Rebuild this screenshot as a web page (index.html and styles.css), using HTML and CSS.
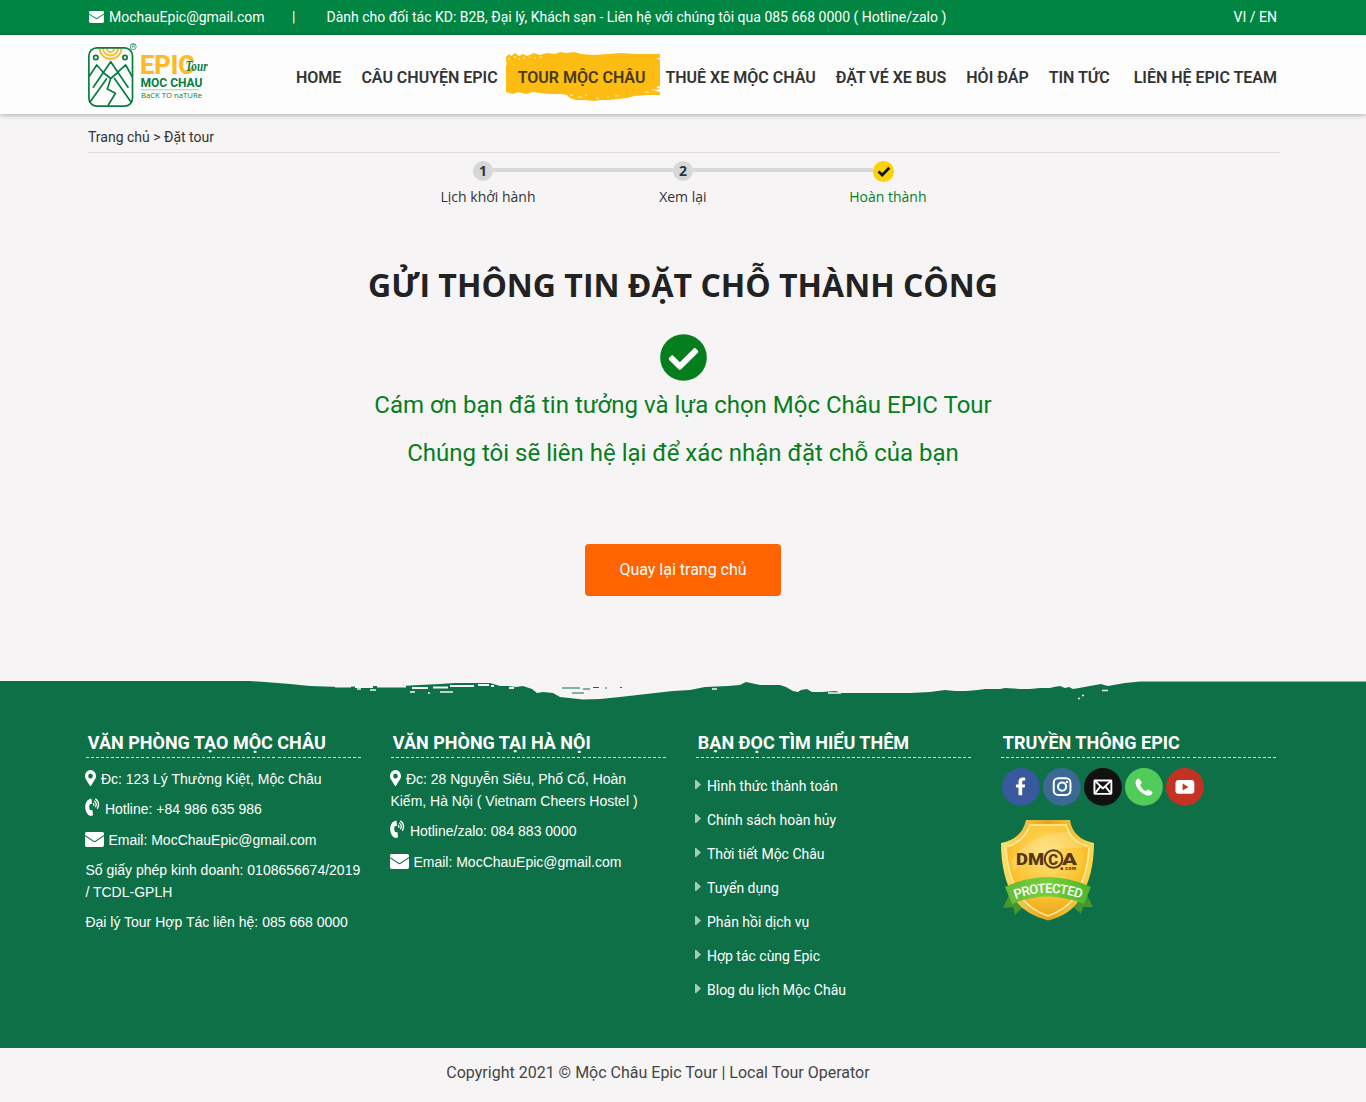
FILE: index.html
```html
<!DOCTYPE html>
<html lang="vi">
<head>
<meta charset="utf-8">
<title>Mộc Châu Epic Tour</title>
<link rel="stylesheet" href="styles.css">
</head>
<body>
<svg class="defs" width="0" height="0">
  <symbol id="mail" viewBox="0 0 19 15"><path d="M1.500 0h16Q19 0 19 1.500V3L9.500 9.200 0 3V1.500Q0 0 1.500 0z"/><path d="M0 4.300 8.300 9.800Q9.500 10.600 10.700 9.800L19 4.300V13.300Q19 15 17.300 15H1.700Q0 15 0 13.300z"/></symbol>
  <symbol id="pin" viewBox="0 0 384 512" preserveAspectRatio="none"><path d="M172 502C27 291 0 270 0 192a192 192 0 1 1 384 0c0 78-27 99-172 310-10 13-30 13-40 0zM192 272a80 80 0 1 0 0-160 80 80 0 0 0 0 160z"/></symbol>
  <symbol id="ring" viewBox="0 0 15 18"><path d="M4.300 1.200 6.400.6 7 5.500 4.600 6.400Q3.700 9.300 5 12L7.500 12.300 8 17.200 5.800 17.900Q3.200 18 1.600 14.800-.8 9.700.9 4.900 2 2.100 4.300 1.200z"/><path d="M8 5Q9.400 6 8.500 7.900M9.200 2.800Q12.500 5.200 10.500 9.200M10.300.7Q15.500 4.600 12.300 10.800" fill="none" stroke="#fff" stroke-width="1.300"/></symbol>
</svg>
<div class="topbar">
  <div class="topbar-in">
    <svg class="top-mail"><use href="#mail"/></svg>
    <span class="t-mail">MochauEpic@gmail.com</span>
    <span class="t-sep">|</span>
    <span class="t-msg">Dành cho đối tác KD: B2B, Đại lý, Khách sạn - Liên hệ với chúng tôi qua 085 668 0000 ( Hotline/zalo )</span>
    <span class="t-lang">VI / EN</span>
  </div>
</div>
<header class="header">
  <div class="header-in">
    <svg class="logo" viewBox="0 0 124 68" width="124" height="68">
      <g fill="none" stroke="#fdb92a" stroke-width="1.800"><path d="M11.500 5a11 11 0 0 0 22 0M15 5a7.500 7.500 0 0 0 15 0M18.500 5a4 4 0 0 0 8 0"/></g>
      <g fill="none" stroke="#087d42" stroke-width="1.700" stroke-linejoin="round" stroke-linecap="round">
        <rect x=".9" y="4.800" width="43.600" height="58.400" rx="8"/>
        <circle cx="7.800" cy="14.500" r="2.200"/><circle cx="37" cy="14.500" r="2.200"/>
        <path d="M1.500 33 8.700 22 14.700 28.700M43.800 33 37.700 22 30.300 28.700M5.300 44.300 22.700 18.700 40 44.300M2 59 18.500 36M14.500 29 22.700 35.500 30.500 29M26.500 35.500 43 59M22.700 35.500 19.300 46 27.500 50.300 20.300 62"/>
      </g>
      <circle cx="45.200" cy="3.600" r="3" fill="none" stroke="#087d42" stroke-width=".7"/>
      <text x="43.500" y="5.400" class="lg-r">R</text>
      <text x="52" y="31" class="lg-epic" textLength="55" lengthAdjust="spacingAndGlyphs">EPIC</text>
      <text x="97.500" y="27.500" class="lg-tour" textLength="22" lengthAdjust="spacingAndGlyphs">Tour</text>
      <text x="52.500" y="44.300" class="lg-moc" textLength="62" lengthAdjust="spacingAndGlyphs">MOC CHAU</text>
      <path d="M53 46.800H111" stroke="#8fc0a5" stroke-width=".8"/>
      <text x="53" y="55.200" class="lg-back" textLength="61" lengthAdjust="spacingAndGlyphs">BaCK TO naTURe</text>
    </svg>
    <nav class="nav">
      <a class="n1">HOME</a>
      <a class="n2">CÂU CHUYỆN EPIC</a>
      <a class="n3 active"><svg class="brush" viewBox="0 0 154 50" width="154" height="50"><path fill="#fdbc11" d="M0 5 3 2 5 4 9 1 13 4 17 2 21 4 28 1 34 3 41 1 49 2 54 0 60 1 68 0 75 2 88 3 102 2 115 1 130 2 154 2V6H150L154 8V34L150 35 154 37 148 39 154 40V43L142 43 128 44 121 46 112 47 103 48 94 48 88 49 78 48 70 48 64 46 61 43 55 42 43 42 34 41 27 40 20 42 12 40 7 42 0 40V14L1 12 0 9z"/><path d="M2 7h2M5 10h1M8 5h2M12 7h2M17 6h2M23 5h1M7 13h1M28 6h2M34 5h2M64 43h3M72 45h4M79 43h2M90 46h3M101 45h2M109 44h4M146 38h6M139 40h4" stroke="#fff3cc" stroke-width="1"/></svg><span>TOUR MỘC CHÂU</span></a>
      <a class="n4">THUÊ XE MỘC CHÂU</a>
      <a class="n5">ĐẶT VÉ XE BUS</a>
      <a class="n6">HỎI ĐÁP</a>
      <a class="n7">TIN TỨC</a>
      <a class="n8">LIÊN HỆ EPIC TEAM</a>
    </nav>
  </div>
</header>
<main class="main">
  <div class="crumb"><span>Trang chủ &gt; Đặt tour</span></div>
  <div class="steps">
    <div class="track"><b class="dot">1</b><i></i><b class="dot">2</b><i></i><b class="dot done"><svg width="14" height="11" viewBox="0 0 14 11"><path d="M1.500 5.500 5.200 9 12.300 1.800" fill="none" stroke="#111" stroke-width="2.700"/></svg></b></div>
    <div class="labels"><span>Lịch khởi hành</span><span class="mid">Xem lại</span><span class="green">Hoàn thành</span></div>
  </div>
  <h1><span>GỬI THÔNG TIN ĐẶT CHỖ THÀNH CÔNG</span></h1>
  <svg class="ok" width="47" height="47" viewBox="0 0 512 512"><circle cx="256" cy="256" r="254" fill="#077e1d"/><path fill="#fff" d="M227 387 412 203c6-6 6-16 0-23l-23-22c-6-6-16-6-22 0L216 308l-71-71c-6-6-16-6-22 0l-23 23c-6 6-6 16 0 22l105 105c6 6 16 6 22 0z"/></svg>
  <p class="thanks"><span class="th1">Cám ơn bạn đã tin tưởng và lựa chọn Mộc Châu EPIC Tour</span></p>
  <p class="thanks"><span class="th2">Chúng tôi sẽ liên hệ lại để xác nhận đặt chỗ của bạn</span></p>
  <a class="btn"><span>Quay lại trang chủ</span></a>
</main>
<footer class="footer">
  <svg class="edge" width="1366" height="20" viewBox="0 0 1366 20">
    <path fill="#f6f4f5" d="M0 0H1366V.5H1140L1125 2 1108 5 1104 4 1101 3 1090 5 1079 7 1073 8 1069 6 1065 7 1060 5 1054 6 1050 7 1040 7 1030 8 1020 8 1005 7 1000 8 985 8 978 9 966 10 955 10 945 9 930 11 910 12 860 12 840 12 836 10 822 11 812 11 807 8 801 9 798 11 793 10 786 6 780 4 768 4 760 4 746 1 740 4 728 5 705 6 690 9 673 10 655 12 620 16 600 18 583 18.500 560 16 553 12 543 11 537 12 532 8 523 5 516 6 508 5 500 5 490 2 480 2 468 2 455 2 440 3 420 4 400 5 370 5 340 6 310 5 290 3 265 1 250 0z"/>
    <g fill="none" stroke="#f6f4f5"><path stroke-width="2" d="M335 5.500h16M355 6h18M377 5.500h29M412 7h16M433 6.500h15M450 5h24M478 4h11M491 5h3M509 7h5"/><path stroke-width="1.500" d="M357 8h4M370 9h6M410 11h5M428 12h2M440 11h13M712 8h5M828 12h13M1078 17.500h2M1082 14.500h2M1102 9.500h6"/></g>
    <path fill="none" stroke="#0e7047" d="M562 7h18M583 8h7M572 12h12M593 6.500h6M605 7h2M620 6.500h2"/>
  </svg>
  <div class="cols">
    <section class="col c1">
      <h3><span>VĂN PHÒNG TẠO MỘC CHÂU</span></h3>
      <p><svg class="i-pin"><use href="#pin"/></svg><span>Đc: 123 Lý Thường Kiệt, Mộc Châu</span></p>
      <p><svg class="i-ring"><use href="#ring"/></svg><span>Hotline: +84 986 635 986</span></p>
      <p><svg class="i-mail"><use href="#mail"/></svg><span>Email: MocChauEpic@gmail.com</span></p>
      <p><span>Số giấy phép kinh doanh: 0108656674/2019<br>/ TCDL-GPLH</span></p>
      <p><span>Đại lý Tour Hợp Tác liên hệ: 085 668 0000</span></p>
    </section>
    <section class="col c2">
      <h3><span>VĂN PHÒNG TẠI HÀ NỘI</span></h3>
      <p><svg class="i-pin"><use href="#pin"/></svg><span>Đc: 28 Nguyễn Siêu, Phố Cổ, Hoàn<br>Kiếm, Hà Nội ( Vietnam Cheers Hostel )</span></p>
      <p><svg class="i-ring"><use href="#ring"/></svg><span>Hotline/zalo: 084 883 0000</span></p>
      <p><svg class="i-mail"><use href="#mail"/></svg><span>Email: MocChauEpic@gmail.com</span></p>
    </section>
    <section class="col c3">
      <h3><span>BẠN ĐỌC TÌM HIỂU THÊM</span></h3>
      <ul>
        <li><span>Hình thức thành toán</span></li>
        <li><span>Chính sách hoàn hủy</span></li>
        <li><span>Thời tiết Mộc Châu</span></li>
        <li><span>Tuyển dụng</span></li>
        <li><span>Phản hồi dịch vụ</span></li>
        <li><span>Hợp tác cùng Epic</span></li>
        <li><span>Blog du lịch Mộc Châu</span></li>
      </ul>
    </section>
    <section class="col c4">
      <h3><span>TRUYỀN THÔNG EPIC</span></h3>
      <div class="social">
        <svg viewBox="0 0 38 38"><circle cx="19" cy="19" r="19" fill="#3a589d"/><path fill="#fff" d="M16.600 27.500V19.700H14V16.500h2.600v-2.600Q16.600 9.500 21 9.500l2.300.2v2.900h-1.500q-1.500 0-1.500 1.500v2.400h3l-.5 3.200h-2.500v7.800z"/></svg>
        <svg viewBox="0 0 38 38"><circle cx="19" cy="19" r="19" fill="#3b6994"/><g fill="none" stroke="#fff" stroke-width="2"><rect x="10.800" y="10.300" width="16.800" height="16.800" rx="4.500"/><circle cx="19.200" cy="18.700" r="4.100"/></g><circle cx="24.100" cy="14" r="1.200" fill="#fff"/></svg>
        <svg viewBox="0 0 38 38"><circle cx="19" cy="19" r="19" fill="#111"/><g fill="none" stroke="#fff" stroke-width="1.900"><rect x="10.500" y="12.500" width="17" height="13.500" rx=".5"/><path d="M11 13 19 20.500 27 13M11 25.500 16.500 18.500M27 25.500 21.500 18.500"/></g></svg>
        <svg viewBox="0 0 38 38"><circle cx="19" cy="19" r="19" fill="#51cb5a"/><path fill="#fff" d="M11 12.500 12.500 11q1-1 2 0l2 3q.6 1-.2 1.900l-1.200 1.400q2 4.200 5.800 6l1.500-1.300q.9-.7 1.900 0l2.800 2q1 .8.200 1.800l-1.500 1.500q-2 1-5.500-.5-6.500-3-9-9-1.200-3.600-.3-5.300z"/></svg>
        <svg viewBox="0 0 38 38"><circle cx="19" cy="19" r="19" fill="#c33223"/><rect x="9.500" y="12" width="19" height="14" rx="3.500" fill="#fff"/><path fill="#c33223" d="M16.700 15.500v7l5.800-3.500z"/></svg>
      </div>
      <svg class="dmca" width="94" height="102" viewBox="0 0 94 102">
        <defs><linearGradient id="g1" x1="0" x2="1"><stop offset="0" stop-color="#ffe06a"/><stop offset=".5" stop-color="#e2a51d"/><stop offset="1" stop-color="#ffd94c"/></linearGradient><radialGradient id="g2" cx=".5" cy=".35" r=".65"><stop offset="0" stop-color="#ffdf72"/><stop offset=".65" stop-color="#fbc331"/><stop offset="1" stop-color="#eea71d"/></radialGradient><linearGradient id="g3" x2="1"><stop stop-color="#67b936"/><stop offset=".5" stop-color="#78cf3c"/><stop offset="1" stop-color="#4bb52b"/></linearGradient></defs>
        <path fill="#439631" d="M8 75 2 88 12 87 14 95 28 81zM86 75 92 87 82 87 80 94 66 81z"/><path fill="#245c28" d="M16 82 29 80 30 87zM78 82 65 80 64 87z"/>
        <path fill="url(#g1)" d="M25 0H69Q72 19 93 23 93 57 78 80 69 95 47 100.500 25 95 14 80 0 57 0 23 21 19 25 0z"/>
        <path fill="url(#g2)" stroke="#ffeaa0" stroke-width="1.600" d="M29 5H65Q70 22 88 27 87 55 74 77 64 90 47 96 30 90 20 77 6 55 5 27 23 22 29 5z"/>
        <path fill="#fff" opacity=".18" d="M11 39Q32 13 68 12 73 22 83 28 38 25 12 51z"/>
        <path fill="url(#g3)" d="M4 67Q47 47 90 67L83 84Q47 69 11 84z"/>
        <g class="dmca-word"><text x="15" y="45" textLength="28" lengthAdjust="spacingAndGlyphs">DM</text><text x="61" y="45" textLength="15" lengthAdjust="spacingAndGlyphs">A</text><text x="47.300" y="44.500" font-size="15">C</text></g><circle cx="52.500" cy="39" r="8.800" fill="none" stroke="#573711" stroke-width="2"/>
        <text x="59" y="49.500" class="dmca-com" textLength="16">■ com</text>
        <path id="arc" d="M14.500 79Q47 66.500 81 79" fill="none"/><text class="dmca-pro"><textPath href="#arc" textLength="67">PROTECTED</textPath></text>
      </svg>
    </section>
  </div>
</footer>
<div class="copy"><span>Copyright 2021 © Mộc Châu Epic Tour | Local Tour Operator</span></div>
</body>
</html>
```
FILE: styles.css
```css
* { box-sizing: border-box; }
body { margin: 0; background: #f6f4f5; font-family: Roboto, sans-serif; color: #333; height: 1102px; overflow: hidden; }
span { white-space: nowrap; }
.defs { display: block; height: 0; }
.topbar { height: 35px; background: #008542; color: #fff; font-size: 14px; line-height: 34px; }
.topbar-in { display: flex; width: 1189px; margin-left: 88px; align-items: center; }
.top-mail { width: 15px; height: 12px; margin: 0 5px 1px 1px; fill: #fff; }
.t-mail { width: 183px; }
.t-sep { width: 34.500px; }
.t-lang { margin-left: auto; }
.header { height: 79px; background: #fdfdfd; box-shadow: 0 1px 5px rgba(0,0,0,.3); position: relative; }
.header-in { display: flex; width: 1189px; margin-left: 88px; justify-content: space-between; padding-top: 8px; }
.logo { overflow: visible; }
.lg-r { font: 5px "Liberation Sans", sans-serif; fill: #087d42; }
.lg-epic { font: 800 25px Roboto, sans-serif; fill: #fdb92a; }
.lg-tour { font: italic bold 15px "Liberation Serif", serif; fill: #087d42; }
.lg-moc { font: bold 13.500px Roboto, sans-serif; fill: #087d42; }
.lg-back { font: 7.600px "Open Sans", sans-serif; fill: #087d42; }
.nav { display: flex; gap: 20px; font-size: 16px; font-weight: 600; line-height: 20px; padding-top: 25px; color: #333; }
.nav a { position: relative; white-space: nowrap; }
.n8 { margin-left: 4px; }
.nav .active { color: #45391a; }
.active span { position: relative; }
.brush { position: absolute; left: -12px; top: -16px; }
.main { width: 1192px; height: 567px; margin-left: 88px; display: flex; flex-direction: column; align-items: center; }
.crumb { width: 100%; height: 39px; border-bottom: 1px solid #dcdddd; font-size: 14px; line-height: 46px; }
.steps { width: 486px; margin-top: 8px; margin-right: 1px; font-family: "Open Sans", sans-serif; font-size: 14px; }
.track { display: flex; align-items: center; width: 421px; margin-left: 32.500px; height: 20px; }
.track i { flex: 1; height: 4px; background: #d6d7da; margin-top: -2px; }
.dot { width: 20px; height: 20px; border-radius: 50%; background: #d6d7da; text-align: center; line-height: 20px; }
.done { width: 21px; height: 21px; background: #fad207; display: flex; align-items: center; justify-content: center; margin-top: 1px; }
.labels { display: flex; justify-content: space-between; line-height: 20px; margin-top: 6px; }
.mid { margin-right: 19px; }
.green { color: #077e1d; }
h1 { font: bold 32px/46px "Open Sans", sans-serif; color: #222; margin: 55px 2px 0 0; }
.ok { margin-top: 26px; margin-right: 1px; }
.thanks { font-size: 24px; line-height: 48px; margin: 0 2px 0 0; color: #077e1d; }
.btn { display: block; width: 196px; height: 52px; border-radius: 4px; background: #ff6400; color: #fff; text-align: center; font-size: 16px; line-height: 51px; margin-top: 67px; margin-right: 2px; }
.footer { height: 367px; background: #0e7047; color: #fff; }
.edge { display: block; }
.cols { display: grid; grid-template-columns: repeat(4, 275px); gap: 30px; margin-left: 86px; padding-top: 29px; }
h3 { margin: 0 0 10px; padding-left: 1.800px; font-size: 18px; font-weight: 700; line-height: 26px; height: 28px; background: repeating-linear-gradient(90deg, #d6e8df 0 3px, transparent 3px 5.040px) 0 100% / 100% 1px no-repeat; }
.col p { margin: 0 0 8.300px -.600px; font: 14px/22px "Liberation Sans", sans-serif; }
.col svg { fill: #fff; }
.i-pin { width: 11px; height: 16px; margin-right: 4.500px; vertical-align: -2px; }
.i-ring { width: 15px; height: 18px; margin-right: 4.500px; vertical-align: -2px; }
.i-mail { width: 19px; height: 15px; margin-right: 4px; vertical-align: -2px; }
ul { list-style: none; margin: 0; padding: 1px 0 0; font-size: 14px; line-height: 34px; }
li { display: flex; align-items: center; }
li::before { content: ""; width: 6px; height: 9px; background: #a5cbb9; clip-path: polygon(0 0, 20% 0, 100% 50%, 20% 100%, 0 100%); margin-left: -1px; margin-right: 6px; margin-top: -3px; }
.social { display: flex; gap: 3.200px; padding-left: .800px; }
.social svg { width: 37.800px; height: 37.800px; }
.dmca { display: block; margin-top: 14px; }
.dmca-word { font: 900 17px Roboto, sans-serif; }
.dmca-word text { fill: #573711; }
.dmca-com { font: 900 5px Roboto, sans-serif; fill: #573711; }
.dmca-pro { font: 500 13px Roboto, sans-serif; fill: #fff; }
.copy { font-size: 16px; line-height: 50px; text-align: center; width: 1316px; color: #444; }
```
